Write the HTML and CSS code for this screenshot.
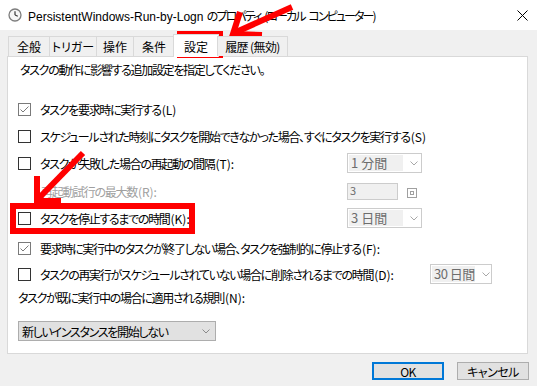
FILE: index.html
```html
<!DOCTYPE html>
<html lang="ja">
<head>
<meta charset="utf-8">
<title>プロパティ</title>
<link rel="stylesheet" href="styles.css">
</head>
<body>
<div class="window">
  <div class="titlebar">
    <svg class="appicon" viewBox="0 0 14 14"><circle cx="7" cy="7" r="6" fill="#f6f6f6" stroke="#7d7d7d" stroke-width="1.3"/><line x1="7" y1="7" x2="7" y2="3.2" stroke="#3a3a3a" stroke-width="1.2"/><line x1="7" y1="7" x2="9.8" y2="8.2" stroke="#3a3a3a" stroke-width="1.2"/></svg>
    <span class="title">PersistentWindows-Run-by-Logn <span class="tjp">のプロパティ (ローカル コンピューター)</span></span>
    <svg class="close" viewBox="0 0 11 11"><line x1="0.5" y1="0.5" x2="10.5" y2="10.5" stroke="#000" stroke-width="1"/><line x1="10.5" y1="0.5" x2="0.5" y2="10.5" stroke="#000" stroke-width="1"/></svg>
  </div>
  <div class="tabs">
    <div class="tab w1">全般</div>
    <div class="tab w2">トリガー</div>
    <div class="tab w3">操作</div>
    <div class="tab w4">条件</div>
    <div class="tab sel">設定</div>
    <div class="tab w6">履歴 (無効)</div>
  </div>
  <div class="panel">
    <div class="intro">タスクの動作に影響する追加設定を指定してください。</div>
    <div class="row r1"><span class="cb checked"><svg viewBox="0 0 11 11"><polyline points="1.5,5.5 4,8 9.5,2.5" fill="none" stroke="#7a7a7a" stroke-width="1"/></svg></span><span class="lbl">タスクを要求時に実行する<span class="k">(L)</span></span></div>
    <div class="row"><span class="cb"></span><span class="lbl">スケジュールされた時刻にタスクを開始できなかった場合、すぐにタスクを実行する<span class="k">(S)</span></span></div>
    <div class="row"><span class="cb"></span><span class="lbl fixed">タスクが失敗した場合の再起動の間隔<span class="k">(T):</span></span><span class="dd"><span class="val">1 分間</span><svg class="chev" viewBox="0 0 8 5"><polyline points="0.5,0.5 4,4 7.5,0.5" fill="none" stroke="#a8a8a8" stroke-width="1"/></svg></span></div>
    <div class="row r4"><span class="lbl fixed2 dis">再起動試行の最大数<span class="k">(R):</span></span><span class="spin">3</span><span class="spinicon"><span></span></span></div>
    <div class="row"><span class="cb"></span><span class="lbl fixed">タスクを停止するまでの時間<span class="k">(K):</span></span><span class="dd"><span class="val">3 日間</span><svg class="chev" viewBox="0 0 8 5"><polyline points="0.5,0.5 4,4 7.5,0.5" fill="none" stroke="#a8a8a8" stroke-width="1"/></svg></span></div>
    <div class="row r6"><span class="cb checked"><svg viewBox="0 0 11 11"><polyline points="1.5,5.5 4,8 9.5,2.5" fill="none" stroke="#7a7a7a" stroke-width="1"/></svg></span><span class="lbl">要求時に実行中のタスクが終了しない場合、タスクを強制的に停止する<span class="k">(F):</span></span></div>
    <div class="row r7"><span class="cb"></span><span class="lbl fixed3">タスクの再実行がスケジュールされていない場合に削除されるまでの時間<span class="k">(D):</span></span><span class="dd small"><span class="val">30 日間</span><svg class="chev" viewBox="0 0 8 5"><polyline points="0.5,0.5 4,4 7.5,0.5" fill="none" stroke="#a8a8a8" stroke-width="1"/></svg></span></div>
    <div class="rule">タスクが既に実行中の場合に適用される規則<span class="k">(N):</span></div>
    <div class="combo"><span class="cval">新しいインスタンスを開始しない</span><svg class="chev" viewBox="0 0 8 5"><polyline points="0.5,0.5 4,4 7.5,0.5" fill="none" stroke="#8a8a8a" stroke-width="1"/></svg></div>
  </div>
  <div class="buttons">
    <div class="btn ok">OK</div>
    <div class="btn">キャンセル</div>
  </div>
</div>
<svg class="annot" viewBox="0 0 537 386" width="537" height="386">
  <rect x="180" y="34" width="40" height="21" fill="none" stroke="#f00" stroke-width="6"/>
  <rect x="13" y="206" width="179" height="25" fill="none" stroke="#f00" stroke-width="6"/>
  <g stroke="#f00" stroke-width="6" fill="none" stroke-linecap="butt" stroke-linejoin="miter">
    <line x1="234" y1="33" x2="292" y2="7"/>
    <polyline points="240,12 233,34 262,35"/>
    <line x1="39" y1="198" x2="83" y2="153"/>
    <polyline points="37,176 37,201 61,201"/>
  </g>
</svg>
</body>
</html>
```

FILE: styles.css
```css
html, body {
  margin: 0;
  padding: 0;
}
body {
  width: 537px;
  height: 386px;
  overflow: hidden;
  background: #f0f0f0;
  font-family: "Noto Sans CJK JP", "Noto Sans", sans-serif;
  font-size: 12px;
  font-feature-settings: "palt";
  color: #000;
  position: relative;
}
.window {
  display: flex;
  flex-direction: column;
}
.titlebar {
  height: 30px;
  background: #fff;
  display: flex;
  align-items: center;
  padding-left: 8px;
}
.appicon {
  width: 14px;
  height: 14px;
  margin-right: 6px;
  flex: none;
}
.title {
  flex: 1;
  font-family: "Liberation Sans", "Noto Sans CJK JP", sans-serif;
  font-size: 12px;
  white-space: nowrap;
}
.tjp {
  font-family: "Noto Sans CJK JP", sans-serif;
  letter-spacing: -1.9px;
  word-spacing: 3px;
}
.close {
  width: 11px;
  height: 11px;
  margin-right: 9px;
  flex: none;
}
.tabs {
  display: flex;
  align-items: flex-end;
  height: 20px;
  margin-top: 6px;
  padding-left: 8px;
  position: relative;
  z-index: 1;
}
.tab {
  box-sizing: border-box;
  height: 20px;
  border: 1px solid #d9d9d9;
  border-bottom: none;
  margin-right: -1px;
  background: #f0f0f0;
  display: flex;
  align-items: center;
  justify-content: center;
  white-space: nowrap;
}
.w1 { width: 42px; }
.w2 { width: 48px; }
.w3 { width: 38px; }
.w4 { width: 42px; }
.w6 { width: 71px; letter-spacing: -0.6px; }
.tab.sel {
  width: 46px;
  height: 23px;
  margin-bottom: -1px;
  background: #fff;
  margin-left: -1px;
  margin-right: -2px;
}
.panel {
  box-sizing: border-box;
  margin-left: 7px;
  width: 521px;
  height: 298px;
  border: 1px solid #d9d9d9;
  background: #fff;
  padding-top: 5px;
  display: flex;
  flex-direction: column;
  letter-spacing: -1.3px;
}
.k {
  letter-spacing: 0;
  margin-left: 1px;
}
.intro {
  height: 16px;
  line-height: 16px;
  padding-left: 12px;
  white-space: nowrap;
}
.row {
  height: 20px;
  display: flex;
  align-items: center;
  padding-left: 10px;
  margin-top: 7px;
  white-space: nowrap;
}
.row.r1 { margin-top: 21px; }
.row.r4 { margin-top: 8px; }
.row.r6 { margin-top: 10px; }
.row.r7 { margin-top: 6px; }
.cb {
  box-sizing: border-box;
  width: 13px;
  height: 13px;
  border: 1px solid #333;
  background: #fff;
  margin-right: 9px;
  flex: none;
  display: flex;
}
.cb.checked {
  border-color: #7a7a7a;
}
.cb svg {
  width: 11px;
  height: 11px;
}
.lbl {
  flex: none;
}
.lbl.fixed { width: 307px; }
.lbl.fixed2 { width: 306px; margin-left: 23px; }
.lbl.fixed3 { width: 390px; }
.dis { color: #a0a0a0; }
.dd {
  box-sizing: border-box;
  width: 75px;
  height: 20px;
  border: 1px solid #cccccc;
  display: flex;
  align-items: center;
  padding: 1px;
  background: #fff;
  letter-spacing: 0;
}
.dd.small { width: 62px; }
.dd .val {
  width: 54px;
  height: 100%;
  background: #f0f0f0;
  color: #6d6d6d;
  font-size: 13px;
  line-height: 16px;
  padding-left: 2px;
  box-sizing: border-box;
}
.dd.small .val { width: 43px; letter-spacing: -0.5px; }
.chev {
  width: 8px;
  height: 5px;
  margin-left: 7px;
}
.spin {
  box-sizing: border-box;
  width: 51px;
  height: 17px;
  border: 1px solid #cccccc;
  background: #f0f0f0;
  color: #6d6d6d;
  font-size: 11px;
  line-height: 13px;
  padding-left: 2px;
  letter-spacing: 0;
}
.spinicon {
  box-sizing: border-box;
  width: 10px;
  height: 10px;
  border: 1px solid #a0a0a0;
  margin-left: 9px;
  margin-top: 4px;
  display: flex;
  align-items: center;
  justify-content: center;
}
.spinicon span {
  box-sizing: border-box;
  width: 4px;
  height: 4px;
  border: 1px solid #a0a0a0;
}
.rule {
  height: 20px;
  line-height: 20px;
  margin-top: 4px;
  padding-left: 10px;
  white-space: nowrap;
}
.combo {
  box-sizing: border-box;
  margin-top: 13px;
  margin-left: 10px;
  width: 198px;
  height: 20px;
  border: 1px solid #adadad;
  background: #e1e1e1;
  display: flex;
  align-items: center;
  padding-left: 3px;
}
.cval {
  flex: 1;
}
.combo .chev {
  margin-right: 5px;
}
.buttons {
  display: flex;
  justify-content: flex-end;
  gap: 13px;
  margin-top: 8px;
  padding-right: 8px;
}
.btn {
  box-sizing: border-box;
  width: 72px;
  height: 18px;
  border: 1px solid #adadad;
  background: #e1e1e1;
  display: flex;
  align-items: center;
  justify-content: center;
  letter-spacing: -0.5px;
}
.btn.ok {
  border: 2px solid #0078d7;
}
.annot {
  position: absolute;
  left: 0;
  top: 0;
  pointer-events: none;
}
```
